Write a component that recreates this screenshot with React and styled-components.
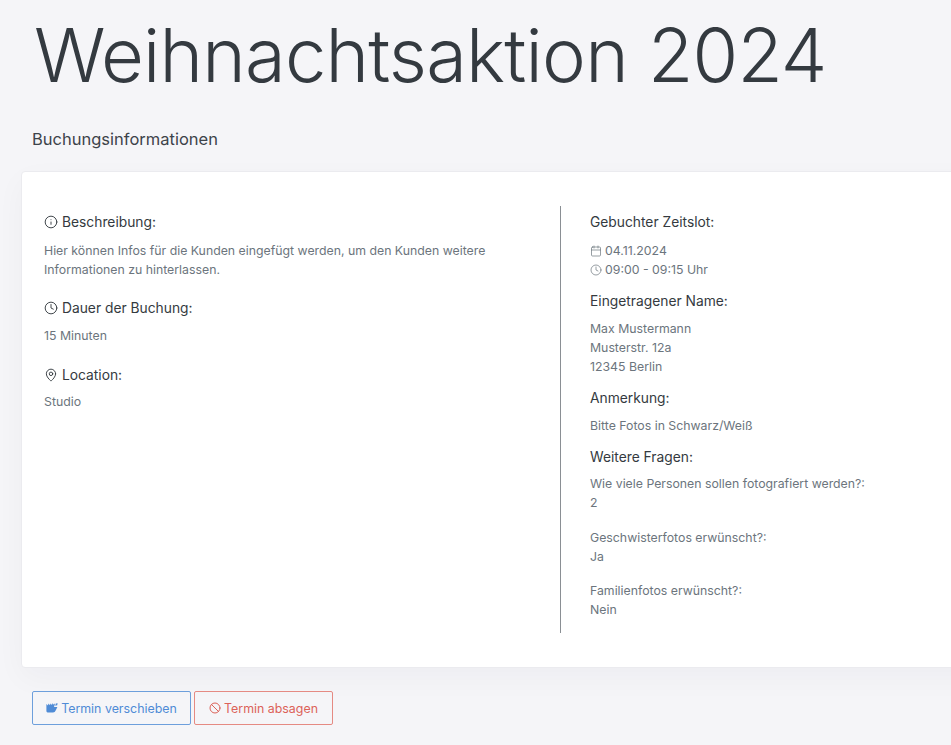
import React from "react";
import styled, { createGlobalStyle } from "styled-components";
import { Info, Clock, MapPin, Calendar, Ban } from "lucide-react";

const GlobalStyle = createGlobalStyle`
  html, body {
    margin: 0;
    height: 745px;
    overflow: hidden;
    background: #f5f5f8;
    font-family: "Inter", "Liberation Sans", sans-serif;
  }
`;

const Page = styled.div`
  width: 951px;
  height: 745px;
  overflow: hidden;
  padding-top: 13px;
  box-sizing: border-box;
`;

const Title = styled.h1`
  margin: 0 0 0 34px;
  font-size: 74px;
  line-height: 84px;
  font-weight: 300;
  color: #343a40;
  white-space: nowrap;
  letter-spacing: -0.8px;
`;

const SubTitle = styled.h2`
  margin: 32px 0 0 32px;
  font-size: 16.5px;
  line-height: 20px;
  font-weight: 400;
  color: #3d434a;
`;

const Card = styled.section`
  margin: 22px 0 0 21px;
  width: 1000px;
  height: 497px;
  box-sizing: border-box;
  padding: 34px 22px;
  background: #fff;
  border: 1px solid #ebebef;
  border-radius: 4px;
  box-shadow: 0 10px 30px rgba(40, 40, 60, 0.035);
  display: flex;
`;

const LeftColumn = styled.div`
  width: 516px;
  flex: none;
  display: flex;
  flex-direction: column;
`;

const RightColumn = styled.div`
  flex: 1;
  border-left: 1px solid #8a8f94;
  padding-left: 29px;
  height: 427px;
  display: flex;
  flex-direction: column;
`;

const Heading = styled.h3`
  margin: ${(p) => p.$top || 0}px 0 0;
  display: flex;
  align-items: center;
  gap: 4px;
  font-size: 13.8px;
  line-height: 20px;
  font-weight: 400;
  color: #343a40;
`;

const Text = styled.p`
  margin: ${(p) => p.$top || 0}px 0 0;
  font-size: 12.3px;
  line-height: 19px;
  color: #6c757d;
  display: flex;
  flex-direction: column;
`;

const IconLine = styled.span`
  display: flex;
  align-items: center;
  gap: 3px;
`;

const Actions = styled.div`
  margin: 23px 0 0 32px;
  display: flex;
  gap: 3px;
`;

const ActionButton = styled.button`
  height: 34px;
  width: ${(p) => p.$width}px;
  padding: 0;
  display: flex;
  align-items: center;
  justify-content: center;
  gap: 3px;
  background: transparent;
  border: 1px solid ${(p) => p.$border};
  border-radius: 2px;
  color: ${(p) => p.$color};
  font-family: inherit;
  font-size: 12.4px;
`;

const MoveIcon = () => (
  <svg width="12" height="10" viewBox="0 0 12 10" fill="currentColor">
    <path d="M0.4 1 L2 2.4 L2.4 0.6 L4 2.2 L4.4 0.4 L6 2 L6.4 0.2 L8 1.8 L8.4 0.4 L9 1 L8 4 L11.4 4 L9.8 7.2 Q9 9.4 7 9.4 L1.6 9.4 Q0.4 9.4 0.4 8 Z" />
    <path d="M9.8 0.6 L11.6 0.2 L11.2 2.2 L9.2 2.8 Z" />
  </svg>
);

export default function App() {
  return (
    <Page>
      <GlobalStyle />
      <Title>Weihnachtsaktion 2024</Title>
      <SubTitle>Buchungsinformationen</SubTitle>
      <Card>
        <LeftColumn>
          <Heading $top={6}>
            <Info size={14} strokeWidth={1.6} />
            Beschreibung:
          </Heading>
          <Text $top={9}>
            <span>Hier können Infos für die Kunden eingefügt werden, um den Kunden weitere</span>
            <span>Informationen zu hinterlassen.</span>
          </Text>
          <Heading $top={19}>
            <Clock size={14} strokeWidth={1.6} />
            Dauer der Buchung:
          </Heading>
          <Text $top={8}>15 Minuten</Text>
          <Heading $top={20}>
            <MapPin size={14} strokeWidth={1.6} />
            Location:
          </Heading>
          <Text $top={7}>Studio</Text>
        </LeftColumn>
        <RightColumn>
          <Heading $top={6}>Gebuchter Zeitslot:</Heading>
          <Text $top={9}>
            <IconLine>
              <Calendar size={12} strokeWidth={1.4} />
              04.11.2024
            </IconLine>
            <IconLine>
              <Clock size={12} strokeWidth={1.4} />
              09:00 - 09:15 Uhr
            </IconLine>
          </Text>
          <Heading $top={12}>Eingetragener Name:</Heading>
          <Text $top={8}>
            <span>Max Mustermann</span>
            <span>Musterstr. 12a</span>
            <span>12345 Berlin</span>
          </Text>
          <Heading $top={12}>Anmerkung:</Heading>
          <Text $top={8}>Bitte Fotos in Schwarz/Weiß</Text>
          <Heading $top={12}>Weitere Fragen:</Heading>
          <Text $top={7}>
            <span>Wie viele Personen sollen fotografiert werden?:</span>
            <span>2</span>
          </Text>
          <Text $top={16}>
            <span>Geschwisterfotos erwünscht?:</span>
            <span>Ja</span>
          </Text>
          <Text $top={15}>
            <span>Familienfotos erwünscht?:</span>
            <span>Nein</span>
          </Text>
        </RightColumn>
      </Card>
      <Actions>
        <ActionButton $color="#4f8bd6" $border="#6d9fdc" $width={159}>
          <MoveIcon />
          Termin verschieben
        </ActionButton>
        <ActionButton $color="#dc6259" $border="#e58a83" $width={139}>
          <Ban size={12} strokeWidth={2} />
          Termin absagen
        </ActionButton>
      </Actions>
    </Page>
  );
}
